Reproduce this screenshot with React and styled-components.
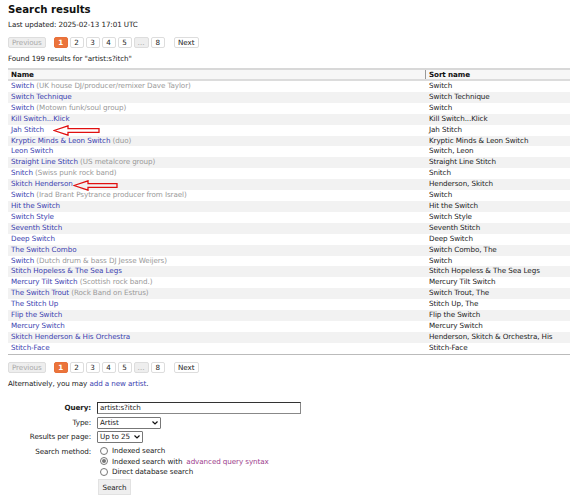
import React from "react";
import styled, { createGlobalStyle } from "styled-components";

const Global = createGlobalStyle`
  html, body { margin: 0; padding: 0; background: #fff; }
  body {
    font-family: "DejaVu Sans", Verdana, sans-serif;
    font-size: 7.2px;
    letter-spacing: -0.1px;
    color: #222;
  }
`;

const Page = styled.div`
  position: relative;
  padding: 0 0 0 8px;
  overflow: hidden;
  height: 500px;
`;

const Title = styled.h2`
  margin: 0;
  font-size: 10.2px;
  letter-spacing: 0;
  line-height: 20px;
  font-weight: bold;
  color: #111;
`;

const Line = styled.p`
  margin: 0 0 ${(p) => p.mb || 0}px 0;
  line-height: 10px;
  height: 10px;
  padding-top: ${(p) => p.pt || 0}px;
  white-space: nowrap;
`;

const Pager = styled.div`
  display: flex;
  align-items: center;
  height: 11px;
  margin-top: ${(p) => p.mt}px;
`;

const PageBtn = styled.span`
  box-sizing: border-box;
  height: 11px;
  min-width: ${(p) => p.w || 14}px;
  padding: 0 3px;
  margin-right: ${(p) => (p.gap === undefined ? 2 : p.gap)}px;
  border: 1px solid ${(p) => (p.active ? "#e8703a" : "#ddd")};
  border-radius: 2px;
  display: flex;
  align-items: center;
  justify-content: center;
  color: ${(p) => (p.active ? "#fff" : p.disabled ? "#aaa" : "#222")};
  background: ${(p) => (p.active ? "#eb743b" : p.disabled ? "#eee" : "#fff")};
  font-weight: ${(p) => (p.active ? "bold" : "normal")};
`;

const Table = styled.div`
  border-top: 2px solid #d8d8d8;
  border-bottom: 1px solid #bbb;
`;

const HeadRow = styled.div`
  display: grid;
  grid-template-columns: 417px 1fr;
  height: 9px;
  background: #f7f7f7;
  border-bottom: 2px solid #dcdcdc;
  font-weight: bold;
  color: #111;
`;

const HeadCell = styled.div`
  padding-left: 3px;
  line-height: 9px;
  border-left: ${(p) => (p.divider ? "1px solid #999" : "none")};
`;

const Row = styled.div`
  display: grid;
  grid-template-columns: 417px 1fr;
  height: 10.92px;
  line-height: 10.92px;
  background: ${(p) => (p.odd ? "#f2f2f2" : "#fff")};
`;

const Cell = styled.div`
  padding-left: ${(p) => (p.sort ? 4 : 3)}px;
  white-space: nowrap;
  overflow: hidden;
  color: #222;
`;

const Link = styled.a`
  color: #3a41b0;
  text-decoration: none;
`;

const Comment = styled.span`
  color: #999;
`;

const Arrow = styled.svg`
  position: absolute;
  left: ${(p) => p.x}px;
  top: ${(p) => p.y}px;
`;

const Form = styled.div`
  display: grid;
  grid-template-columns: 83px 1fr;
  column-gap: 6px;
  margin-top: 13px;
  align-items: start;
`;

const Label = styled.div`
  text-align: right;
  font-weight: ${(p) => (p.bold ? "bold" : "normal")};
  line-height: 11px;
  white-space: nowrap;
`;

const Field = styled.div`
  height: ${(p) => p.h || 14}px;
  display: flex;
  flex-direction: ${(p) => (p.col ? "column" : "row")};
`;

const TextBox = styled.div`
  box-sizing: border-box;
  width: 204px;
  height: 12px;
  border: 1px solid #333;
  border-right-color: #888;
  border-bottom-color: #888;
  padding-left: 2px;
  line-height: 10px;
`;

const Select = styled.div`
  box-sizing: border-box;
  width: ${(p) => p.w}px;
  height: 12px;
  border: 1px solid #777;
  border-radius: 1px;
  padding: 0 2px 0 2px;
  display: flex;
  align-items: center;
  justify-content: space-between;
  white-space: nowrap;
  background: #fff;
`;

const Caret = styled.svg`
  flex: none;
`;

const Radio = styled.label`
  display: flex;
  align-items: center;
  height: 10.5px;
  padding-left: 3px;
  gap: 4px;
  white-space: nowrap;
`;

const Dot = styled.span`
  box-sizing: border-box;
  width: 8px;
  height: 8px;
  border-radius: 50%;
  border: 1px solid #777;
  display: flex;
  align-items: center;
  justify-content: center;
  &::after {
    content: "";
    display: ${(p) => (p.checked ? "block" : "none")};
    width: 4px;
    height: 4px;
    border-radius: 50%;
    background: #777;
  }
`;

const Purple = styled.a`
  color: #9c3c8c;
  text-decoration: none;
`;

const Button = styled.div`
  box-sizing: border-box;
  width: 33px;
  height: 16px;
  margin-left: 1px;
  margin-top: 2px;
  background: #efefef;
  border: 1px solid #e2e2e2;
  display: flex;
  align-items: center;
  justify-content: center;
`;

const rows = [
  ["Switch", "UK house DJ/producer/remixer Dave Taylor", "Switch"],
  ["Switch Technique", null, "Switch Technique"],
  ["Switch", "Motown funk/soul group", "Switch"],
  ["Kill Switch...Klick", null, "Kill Switch...Klick"],
  ["Jah Stitch", null, "Jah Stitch"],
  ["Kryptic Minds & Leon Switch", "duo", "Kryptic Minds & Leon Switch"],
  ["Leon Switch", null, "Switch, Leon"],
  ["Straight Line Stitch", "US metalcore group", "Straight Line Stitch"],
  ["Snitch", "Swiss punk rock band", "Snitch"],
  ["Skitch Henderson", null, "Henderson, Skitch"],
  ["Switch", "Irad Brant Psytrance producer from Israel", "Switch"],
  ["Hit the Switch", null, "Hit the Switch"],
  ["Switch Style", null, "Switch Style"],
  ["Seventh Stitch", null, "Seventh Stitch"],
  ["Deep Switch", null, "Deep Switch"],
  ["The Switch Combo", null, "Switch Combo, The"],
  ["Switch", "Dutch drum & bass DJ Jesse Weijers", "Switch"],
  ["Stitch Hopeless & The Sea Legs", null, "Stitch Hopeless & The Sea Legs"],
  ["Mercury Tilt Switch", "Scottish rock band.", "Mercury Tilt Switch"],
  ["The Switch Trout", "Rock Band on Estrus", "Switch Trout, The"],
  ["The Stitch Up", null, "Stitch Up, The"],
  ["Flip the Switch", null, "Flip the Switch"],
  ["Mercury Switch", null, "Mercury Switch"],
  ["Skitch Henderson & His Orchestra", null, "Henderson, Skitch & Orchestra, His"],
  ["Stitch-Face", null, "Stitch-Face"],
];

function Pagination({ mt }) {
  return (
    <Pager mt={mt}>
      <PageBtn disabled w={37} gap={8}>Previous</PageBtn>
      <PageBtn active>1</PageBtn>
      <PageBtn>2</PageBtn>
      <PageBtn>3</PageBtn>
      <PageBtn>4</PageBtn>
      <PageBtn>5</PageBtn>
      <PageBtn disabled>…</PageBtn>
      <PageBtn gap={9}>8</PageBtn>
      <PageBtn w={25}>Next</PageBtn>
    </Pager>
  );
}

function RedArrow({ x, y, w }) {
  return (
    <Arrow x={x} y={y} width={w} height={11} viewBox={`0 0 ${w} 11`}>
      <path
        d={`M1 5.5 L15 0.8 L15 3.6 L${w - 1} 3.6 L${w - 1} 7.4 L15 7.4 L15 10.2 Z`}
        fill="none"
        stroke="#e01010"
        strokeWidth="1.3"
      />
    </Arrow>
  );
}

function Chevron() {
  return (
    <Caret width="6" height="4" viewBox="0 0 6 4">
      <path d="M0.5 0.5 L3 3 L5.5 0.5" fill="none" stroke="#111" strokeWidth="1.2" />
    </Caret>
  );
}

export default function App() {
  return (
    <Page>
      <Global />
      <Title>Search results</Title>
      <Line>Last updated: 2025-02-13 17:01 UTC</Line>
      <Pagination mt={7} />
      <Line pt={6} mb={4}>Found 199 results for "artist:s?itch"</Line>
      <Table>
        <HeadRow>
          <HeadCell>Name</HeadCell>
          <HeadCell divider>Sort name</HeadCell>
        </HeadRow>
        {rows.map(([name, comment, sort], i) => (
          <Row key={i} odd={i % 2 === 1}>
            <Cell>
              <Link>{name}</Link>
              {comment && <Comment> ({comment})</Comment>}
            </Cell>
            <Cell sort>{sort}</Cell>
          </Row>
        ))}
      </Table>
      <Pagination mt={7} />
      <Line pt={6}>
        Alternatively, you may <Link>add a new artist</Link>.
      </Line>
      <Form>
        <Label bold>Query:</Label>
        <Field h={15}>
          <TextBox>artist:s?itch</TextBox>
        </Field>
        <Label>Type:</Label>
        <Field h={14}>
          <Select w={64}>Artist<Chevron /></Select>
        </Field>
        <Label>Results per page:</Label>
        <Field h={15}>
          <Select w={46}>Up to 25<Chevron /></Select>
        </Field>
        <Label>Search method:</Label>
        <Field col h={31.5}>
          <Radio><Dot />Indexed search</Radio>
          <Radio><Dot checked />Indexed search with <Purple>advanced query syntax</Purple></Radio>
          <Radio><Dot />Direct database search</Radio>
        </Field>
        <div />
        <Field h={20}>
          <Button>Search</Button>
        </Field>
      </Form>
      <RedArrow x={53} y={125} w={47} />
      <RedArrow x={73} y={180} w={45} />
    </Page>
  );
}
